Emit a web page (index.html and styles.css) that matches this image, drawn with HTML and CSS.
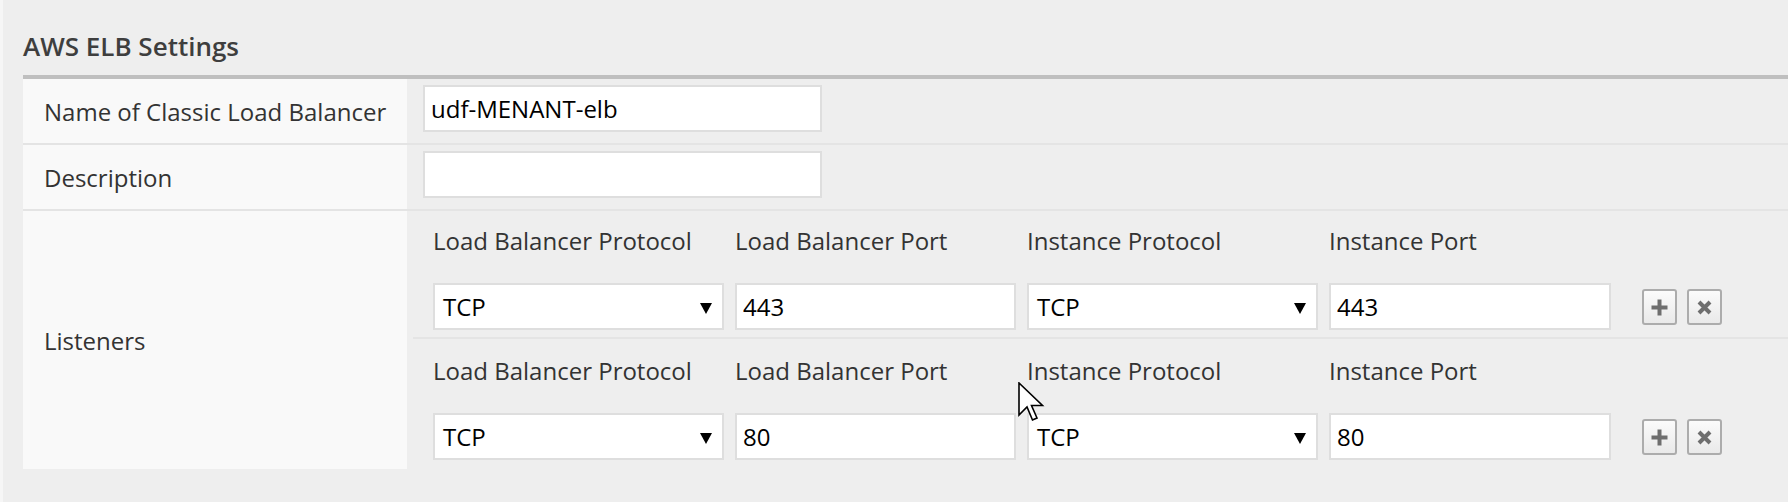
FILE: index.html
```html
<!DOCTYPE html>
<html>
<head>
<meta charset="utf-8">
<link rel="stylesheet" href="styles.css">
</head>
<body>
<div class="page">
  <h2 class="title">AWS ELB Settings</h2>
  <div class="panel">
    <div class="row">
      <div class="label">Name of Classic Load Balancer</div>
      <div class="field"><input class="text wide" type="text" value="udf-MENANT-elb"></div>
    </div>
    <div class="row">
      <div class="label">Description</div>
      <div class="field"><input class="text wide" type="text" value=""></div>
    </div>
    <div class="row">
      <div class="label">Listeners</div>
      <div class="listeners">
        <div class="listener">
          <div class="head">Load Balancer Protocol</div>
          <div class="head">Load Balancer Port</div>
          <div class="head">Instance Protocol</div>
          <div class="head">Instance Port</div>
          <div class="head"></div>
          <div class="select"><span>TCP</span><svg class="arrow" width="12" height="12" viewBox="0 0 12 12"><polygon points="0,1 12,1 6,12" fill="#000"/></svg></div>
          <input class="text" type="text" value="443">
          <div class="select"><span>TCP</span><svg class="arrow" width="12" height="12" viewBox="0 0 12 12"><polygon points="0,1 12,1 6,12" fill="#000"/></svg></div>
          <input class="text" type="text" value="443">
          <div class="actions">
            <button class="btn" type="button"><svg width="17" height="17" viewBox="0 0 17 17"><path d="M8.5 0.5v16M0.5 8.5h16" stroke="#6e6e6e" stroke-width="4"/></svg></button>
            <button class="btn" type="button"><svg width="15" height="15" viewBox="0 0 15 15"><path d="M2 2l11 11M13 2L2 13" stroke="#6e6e6e" stroke-width="4"/></svg></button>
          </div>
        </div>
        <div class="listener">
          <div class="head">Load Balancer Protocol</div>
          <div class="head">Load Balancer Port</div>
          <div class="head">Instance Protocol</div>
          <div class="head">Instance Port</div>
          <div class="head"></div>
          <div class="select"><span>TCP</span><svg class="arrow" width="12" height="12" viewBox="0 0 12 12"><polygon points="0,1 12,1 6,12" fill="#000"/></svg></div>
          <input class="text" type="text" value="80">
          <div class="select"><span>TCP</span><svg class="arrow" width="12" height="12" viewBox="0 0 12 12"><polygon points="0,1 12,1 6,12" fill="#000"/></svg></div>
          <input class="text" type="text" value="80">
          <div class="actions">
            <button class="btn" type="button"><svg width="17" height="17" viewBox="0 0 17 17"><path d="M8.5 0.5v16M0.5 8.5h16" stroke="#6e6e6e" stroke-width="4"/></svg></button>
            <button class="btn" type="button"><svg width="15" height="15" viewBox="0 0 15 15"><path d="M2 2l11 11M13 2L2 13" stroke="#6e6e6e" stroke-width="4"/></svg></button>
          </div>
        </div>
      </div>
    </div>
  </div>
  <svg class="cursor" width="28" height="42" viewBox="0 0 28 42"><polygon points="1,1 1,33 9,25 14.5,38 19,36 13.5,23.5 24.5,23.5" fill="#fff" stroke="#000" stroke-width="1.6" stroke-linejoin="miter"/></svg>
</div>
</body>
</html>
```
FILE: styles.css
```css
html, body {
  margin: 0;
  padding: 0;
}
body {
  background: #eeeeee;
  width: 1788px;
  height: 502px;
  overflow: hidden;
  font-family: "Open Sans", "Liberation Sans", sans-serif;
  color: #333;
}
.page {
  position: relative;
  height: 502px;
  border-left: 3px solid #f6f6f6;
  padding-left: 20px;
}
.title {
  margin: 0 0 12px 0;
  padding-top: 30px;
  font-size: 26px;
  line-height: 33px;
  font-weight: 600;
  color: #3e3e3e;
}
.panel {
  border-top: 4px solid #bfbfbf;
}
.row {
  display: grid;
  grid-template-columns: 384px 1fr;
}
.row + .row {
  border-top: 2px solid #e4e4e4;
}
.label {
  background: #f9f9f9;
  display: flex;
  align-items: center;
  padding-left: 21px;
  font-size: 24px;
  color: #333;
}
.field {
  padding: 6px 0 11px 16px;
}
.text {
  box-sizing: border-box;
  height: 47px;
  border: 2px solid #dedede;
  background: #fff;
  padding: 0 6px;
  font-family: "Open Sans", "Liberation Sans", sans-serif;
  font-size: 24px;
  color: #000;
  outline: none;
  margin: 0;
  width: 100%;
}
.text.wide {
  width: 399px;
}
.listeners {
  padding-left: 6px;
}
.listener {
  display: grid;
  grid-template-columns: 291px 281px 291px 282px auto;
  column-gap: 11px;
  row-gap: 26px;
  padding: 13px 0 7px 20px;
}
.listener + .listener {
  border-top: 2px solid #e4e4e4;
  padding-top: 15px;
  padding-bottom: 9px;
}
.head {
  font-size: 24px;
  line-height: 33px;
  color: #333;
  white-space: nowrap;
}
.select {
  position: relative;
  box-sizing: border-box;
  height: 47px;
  border: 2px solid #dedede;
  background: #fff;
  display: flex;
  align-items: center;
  padding-left: 8px;
  font-size: 24px;
  color: #000;
}
.arrow {
  position: absolute;
  right: 10px;
  top: 17px;
}
.actions {
  display: flex;
  gap: 10px;
  align-items: center;
  margin-left: 20px;
  padding-top: 1px;
}
.btn {
  box-sizing: border-box;
  width: 35px;
  height: 36px;
  border: 2px solid #acacac;
  border-radius: 3px;
  background: linear-gradient(#fbfbfb, #e9e9e9);
  display: flex;
  align-items: center;
  justify-content: center;
  padding: 0;
  margin: 0;
}
.cursor {
  position: absolute;
  left: 1015px;
  top: 382px;
}
```
